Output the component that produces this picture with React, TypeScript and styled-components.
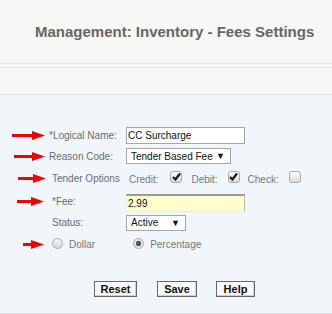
import styled, { createGlobalStyle } from "styled-components"

const GlobalStyle = createGlobalStyle`
  body {
    margin: 0;
    background: #f1f6fb;
    font-family: "Liberation Sans", Arial, sans-serif;
  }
`

interface ArrowProps {
  width: number
}

const Arrow = ({ width }: ArrowProps) => (
  <svg width={width} height={9} viewBox={`0 0 ${width} 9`}>
    <rect x={0} y={3} width={width - 10} height={3} fill="#f20000" />
    <polygon points={`${width - 13},0 ${width},4.5 ${width - 13},9`} fill="#f20000" />
  </svg>
)

const Check = () => (
  <svg width={9} height={9} viewBox="0 0 9 9">
    <path d="M1 5 L3.5 7.5 L8 1.5" stroke="#1a1a1a" strokeWidth={2.2} fill="none" />
  </svg>
)

const App = () => {
  return (
    <>
      <GlobalStyle />
      <Header>
        <Title>Management: Inventory - Fees Settings</Title>
      </Header>
      <SubBar />
      <FormArea>
        <Grid>
          <ArrowCell left={12}><Arrow width={33} /></ArrowCell>
          <Label indent={1}>*Logical Name:</Label>
          <Control><TextInput defaultValue="CC Surcharge" /></Control>

          <ArrowCell left={14}><Arrow width={31} /></ArrowCell>
          <Label indent={1}>Reason Code:</Label>
          <Control>
            <SelectBox width={105}>
              <span>Tender Based Fee</span>
              <Caret>▼</Caret>
            </SelectBox>
          </Control>

          <ArrowCell left={18}><Arrow width={28} /></ArrowCell>
          <Label indent={4}>Tender Options</Label>
          <Control>
            <Options>
              <OptText>Credit:</OptText>
              <CheckBox><Check /></CheckBox>
              <OptText>Debit:</OptText>
              <CheckBox><Check /></CheckBox>
              <OptText>Check:</OptText>
              <CheckBox />
            </Options>
          </Control>

          <ArrowCell left={17}><Arrow width={27} /></ArrowCell>
          <Label indent={4}>*Fee:</Label>
          <Control><FeeInput defaultValue="2.99" /></Control>

          <ArrowCell left={0} />
          <Label indent={4}>Status:</Label>
          <Control>
            <SelectBox width={60}>
              <span>Active</span>
              <Caret>▼</Caret>
            </SelectBox>
          </Control>

          <ArrowCell left={23}><Arrow width={21} /></ArrowCell>
          <RadioRow>
            <RadioOption>
              <Radio />
              <span>Dollar</span>
            </RadioOption>
            <RadioOption>
              <Radio checked />
              <span>Percentage</span>
            </RadioOption>
          </RadioRow>
        </Grid>
        <Buttons>
          <Button width={43}>Reset</Button>
          <Button width={40}>Save</Button>
          <Button width={39}>Help</Button>
        </Buttons>
      </FormArea>
    </>
  )
}

export default App

const Header = styled.div`
  height: 63px;
  background: #f7f7f5;
  box-sizing: border-box;
  padding: 23px 0 0 35px;
`

const Title = styled.h1`
  margin: 0;
  font-size: 15px;
  line-height: 17px;
  font-weight: bold;
  color: #666;
`

const SubBar = styled.div`
  height: 32px;
  box-sizing: border-box;
  background: #f7f7f5;
  border-top: 1px solid #e3e3e3;
  border-bottom: 1px solid #e6e6e6;
  box-shadow: inset 0 3px 0 #f7f7f5, inset 0 4px 0 #e6e6e6;
`

const FormArea = styled.div`
  height: 219px;
  box-sizing: border-box;
  background: #f1f6fb;
  border-bottom: 1px solid #dcdcdc;
  padding-top: 30px;
`

const Grid = styled.div`
  display: grid;
  grid-template-columns: 48px 78px 1fr;
  grid-template-rows: 21px 20px 24px 23px 19px 24px;
  align-items: center;
`

const ArrowCell = styled.div<{ left: number }>`
  display: flex;
  align-items: center;
  padding-left: ${(p) => p.left}px;
`

const Label = styled.div<{ indent: number }>`
  padding-left: ${(p) => p.indent}px;
  font-size: 10px;
  color: #6b6b6b;
  white-space: nowrap;
`

const Control = styled.div`
  display: flex;
  align-items: center;
`

const TextInput = styled.input`
  width: 119px;
  height: 17px;
  box-sizing: border-box;
  border: 1px solid #a5a5a5;
  background: #fff;
  padding: 0 1px;
  font-family: "Liberation Sans", Arial, sans-serif;
  font-size: 10px;
  color: #111;
  outline: none;
`

const FeeInput = styled(TextInput)`
  height: 18px;
  background: #ffffcb;
  border-style: solid;
  border-width: 2px 1px 1px 1px;
  border-color: #9a9a9a #b8b8b8 #ececec #ececec;
  margin-top: 2px;
`

const SelectBox = styled.div<{ width: number }>`
  width: ${(p) => p.width}px;
  height: 16px;
  box-sizing: border-box;
  border: 1px solid #a5a5a5;
  background: #fff;
  display: flex;
  align-items: center;
  justify-content: space-between;
  padding: 0 5px 0 4px;
  font-size: 10px;
  color: #111;
`

const Caret = styled.span`
  font-size: 9px;
  color: #111;
`

const Options = styled.div`
  display: flex;
  align-items: center;
  padding-left: 3px;
  margin-top: 3px;

  & > span:nth-child(2) {
    margin-left: 12px;
  }
  & > span:nth-child(3) {
    margin-left: 9px;
  }
  & > span:nth-child(4) {
    margin-left: 10px;
  }
  & > span:nth-child(5) {
    margin-left: 8px;
  }
  & > span:nth-child(6) {
    margin-left: 10px;
  }
`

const OptText = styled.span`
  font-size: 10px;
  color: #777;
`

const CheckBox = styled.span`
  width: 12px;
  height: 12px;
  box-sizing: border-box;
  border: 1px solid #a8a8a8;
  border-radius: 3px;
  background: linear-gradient(#fdfdfd, #dcdcdc);
  display: flex;
  align-items: center;
  justify-content: center;
  margin-top: -6px;
`

const RadioRow = styled.div`
  grid-column: 2 / 4;
  display: flex;
  align-items: center;
  padding-left: 4px;
  gap: 38px;
`

const RadioOption = styled.div`
  display: flex;
  align-items: center;
  gap: 6px;
  font-size: 10px;
  color: #777;
`

const Radio = styled.span<{ checked?: boolean }>`
  width: 11px;
  height: 11px;
  box-sizing: border-box;
  border-radius: 50%;
  border: 1px solid #a8a8a8;
  background: ${(p) =>
    p.checked
      ? "radial-gradient(circle, #555 0 2.5px, #e6e6e6 3px)"
      : "linear-gradient(#f6f6f6, #d6d6d6)"};
  margin-top: -2px;
`

const Buttons = styled.div`
  display: flex;
  gap: 20px;
  padding-left: 94px;
  margin-top: 25px;

  & > button:last-child {
    margin-left: -1px;
  }
`

const Button = styled.button<{ width: number }>`
  width: ${(p) => p.width}px;
  height: 16px;
  padding: 0;
  box-sizing: border-box;
  border: 1px solid #666;
  background: #fafafa;
  box-shadow: inset -1px -1px 0 #cfcfcf;
  font-family: "Liberation Sans", Arial, sans-serif;
  font-size: 11px;
  font-weight: bold;
  color: #111;
  line-height: 12px;
`
